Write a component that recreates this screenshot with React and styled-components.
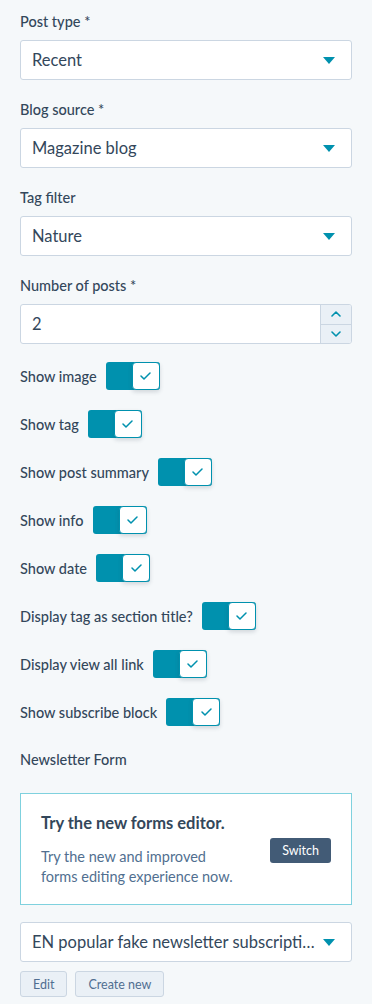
import styled, { createGlobalStyle } from "styled-components";

const GlobalStyle = createGlobalStyle`
  html, body {
    margin: 0;
    padding: 0;
    background: #f5f8fa;
  }
  body {
    font-family: Lato, "Noto Sans", sans-serif;
    color: #33475b;
  }
`;

const toggles = [
  "Show image",
  "Show tag",
  "Show post summary",
  "Show info",
  "Show date",
  "Display tag as section title?",
  "Display view all link",
  "Show subscribe block",
];

function Caret() {
  return (
    <svg width="12" height="7" viewBox="0 0 12 7">
      <path d="M0 0 H12 L6 7 Z" fill="#0091ae" />
    </svg>
  );
}

function Chevron({ up }) {
  return (
    <svg width="10" height="6" viewBox="0 0 10 6">
      <path
        d={up ? "M1 5 L5 1 L9 5" : "M1 1 L5 5 L9 1"}
        fill="none"
        stroke="#0091ae"
        strokeWidth="1.6"
        strokeLinecap="round"
        strokeLinejoin="round"
      />
    </svg>
  );
}

function Check() {
  return (
    <svg width="11" height="8" viewBox="0 0 11 8">
      <path
        d="M1 4 L4 7 L10 1"
        fill="none"
        stroke="#0091ae"
        strokeWidth="1.5"
        strokeLinecap="round"
        strokeLinejoin="round"
      />
    </svg>
  );
}

function Select({ value }) {
  return (
    <SelectBox>
      <SelectValue>{value}</SelectValue>
      <Caret />
    </SelectBox>
  );
}

export default function App() {
  return (
    <>
      <GlobalStyle />
      <Panel>
        <Field>
          <Label>Post type *</Label>
          <Select value="Recent" />
        </Field>
        <Field>
          <Label>Blog source *</Label>
          <Select value="Magazine blog" />
        </Field>
        <Field>
          <Label>Tag filter</Label>
          <Select value="Nature" />
        </Field>
        <Field>
          <Label>Number of posts *</Label>
          <NumberBox>
            <NumberValue>2</NumberValue>
            <Stepper>
              <StepButton>
                <Chevron up />
              </StepButton>
              <StepButton>
                <Chevron />
              </StepButton>
            </Stepper>
          </NumberBox>
        </Field>

        <ToggleList>
          {toggles.map((t) => (
            <ToggleRow key={t}>
              <ToggleLabel>{t}</ToggleLabel>
              <Toggle>
                <Knob>
                  <Check />
                </Knob>
              </Toggle>
            </ToggleRow>
          ))}
        </ToggleList>

        <SectionLabel>Newsletter Form</SectionLabel>
        <Card>
          <CardText>
            <CardTitle>Try the new forms editor.</CardTitle>
            <CardBody>
              Try the new and improved
              <br />
              forms editing experience now.
            </CardBody>
          </CardText>
          <DarkButton>Switch</DarkButton>
        </Card>

        <Select value="EN popular fake newsletter subscription form" />
        <ButtonRow>
          <LightButton>Edit</LightButton>
          <LightButton>Create new</LightButton>
        </ButtonRow>
      </Panel>
    </>
  );
}

const Panel = styled.div`
  width: 332px;
  padding: 12px 20px 8px;
  display: flex;
  flex-direction: column;
`;

const Field = styled.div`
  display: flex;
  flex-direction: column;
  gap: 8px;
  margin-bottom: 20px;

  &:nth-of-type(4) {
    margin-bottom: 18px;
  }
`;

const Label = styled.div`
  font-size: 14.5px;
  line-height: 20px;
  font-weight: 500;
`;

const SelectBox = styled.div`
  box-sizing: border-box;
  height: 40px;
  background: #fff;
  border: 1px solid #cbd6e2;
  border-radius: 3px;
  display: flex;
  align-items: center;
  gap: 6px;
  padding: 0 16px 0 11px;
`;

const SelectValue = styled.div`
  flex: 1;
  min-width: 0;
  font-size: 16.5px;
  white-space: nowrap;
  overflow: hidden;
  text-overflow: ellipsis;
`;

const NumberBox = styled(SelectBox)`
  padding: 0 0 0 11px;
  overflow: hidden;
`;

const NumberValue = styled(SelectValue)``;

const Stepper = styled.div`
  width: 30px;
  height: 100%;
  display: flex;
  flex-direction: column;
  border-left: 1px solid #cbd6e2;
  background: #eaf0f6;
`;

const StepButton = styled.div`
  flex: 1;
  display: flex;
  align-items: center;
  justify-content: center;

  & + & {
    border-top: 1px solid #cbd6e2;
  }
`;

const ToggleList = styled.div`
  display: flex;
  flex-direction: column;
  gap: 20px;
`;

const ToggleRow = styled.div`
  display: flex;
  align-items: center;
  gap: 9px;
  height: 28px;
`;

const ToggleLabel = styled.div`
  font-size: 14.5px;
  font-weight: 500;
`;

const Toggle = styled.div`
  box-sizing: border-box;
  width: 54px;
  height: 28px;
  background: #0091ae;
  border-radius: 3px;
  display: flex;
  justify-content: flex-end;
`;

const Knob = styled.div`
  box-sizing: border-box;
  width: 28px;
  height: 28px;
  background: #fff;
  border: 1px solid #0091ae;
  border-radius: 4px;
  display: flex;
  align-items: center;
  justify-content: center;
  box-shadow: 0 2px 4px rgba(45, 62, 80, 0.18);
`;

const SectionLabel = styled(Label)`
  margin: 24px 0 23px;
`;

const Card = styled.div`
  box-sizing: border-box;
  height: 112px;
  background: #fff;
  border: 1px solid #7fd1de;
  display: flex;
  align-items: center;
  justify-content: space-between;
  padding: 0 20px;
  margin-bottom: 17px;
`;

const CardText = styled.div`
  display: flex;
  flex-direction: column;
  gap: 14px;
  padding-top: 2px;
`;

const CardTitle = styled.div`
  font-size: 16.5px;
  font-weight: 700;
  line-height: 20px;
`;

const CardBody = styled.div`
  font-size: 14.5px;
  line-height: 20px;
  color: #516f90;
`;

const DarkButton = styled.div`
  box-sizing: border-box;
  height: 25px;
  padding: 0 12px;
  background: #425b76;
  border-radius: 3px;
  color: #fff;
  font-size: 12.5px;
  display: flex;
  align-items: center;
  margin-top: 2px;
`;

const ButtonRow = styled.div`
  display: flex;
  gap: 8px;
  margin-top: 9px;
`;

const LightButton = styled.div`
  box-sizing: border-box;
  height: 26px;
  padding: 0 12px;
  background: #eaf0f6;
  border: 1px solid #cbd6e2;
  border-radius: 3px;
  color: #506e91;
  font-size: 12.5px;
  display: flex;
  align-items: center;
`;
